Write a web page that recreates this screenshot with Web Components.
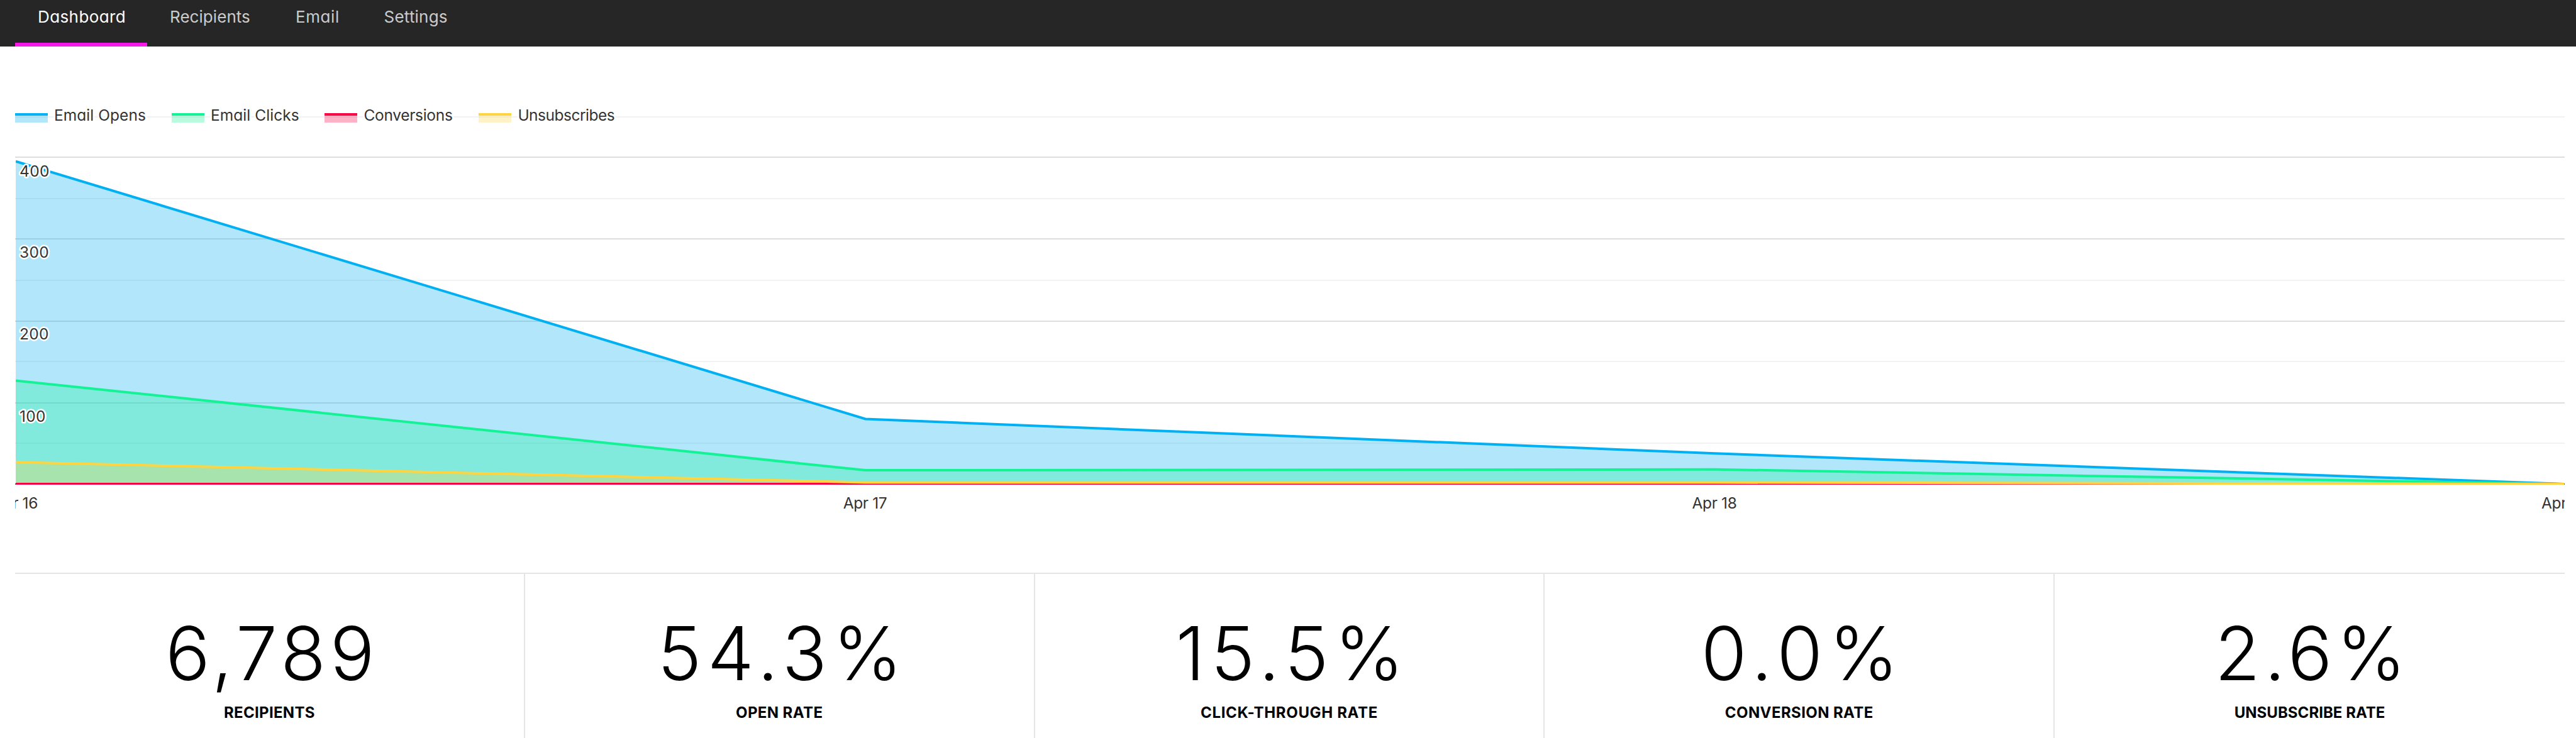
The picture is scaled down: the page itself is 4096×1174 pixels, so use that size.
<!DOCTYPE html>
<html lang="en">
<head>
<meta charset="utf-8">
<title>Dashboard</title>
<style>
  html, body {
    margin: 0;
    height: 100%;
    overflow: hidden;
    background: #fff;
    font-family: Inter, "Liberation Sans", sans-serif;
    font-feature-settings: "cv11";
  }
</style>
</head>
<body>
<dashboard-page>
  <nav-bar slot="nav">
    <nav-item active style="width: 210px; letter-spacing: 0.4px">Dashboard</nav-item>
    <nav-item style="width: 200px; letter-spacing: 0.05px">Recipients</nav-item>
    <nav-item style="width: 140.6px; letter-spacing: 0.6px">Email</nav-item>
    <nav-item style="width: 175px; letter-spacing: 0.2px">Settings</nav-item>
  </nav-bar>
  <area-chart>
    <legend-item slot="legend" color="0, 176, 243" style="width: 249px; letter-spacing: 0.05px">Email Opens</legend-item>
    <legend-item slot="legend" color="19, 243, 149" style="width: 243.4px; letter-spacing: 0.05px">Email Clicks</legend-item>
    <legend-item slot="legend" color="247, 0, 68" style="width: 245px; letter-spacing: -0.3px">Conversions</legend-item>
    <legend-item slot="legend" color="254, 213, 65" style="letter-spacing: -0.5px">Unsubscribes</legend-item>
  </area-chart>
  <stat-row slot="stats">
    <stat-card style="--value-gap: 6.7px; --label-gap: 0.3px">6,789<span slot="label">RECIPIENTS</span></stat-card>
    <stat-card style="--value-gap: 9.2px; --label-gap: 0.4px">54.3%<span slot="label">OPEN RATE</span></stat-card>
    <stat-card style="--value-gap: 9.4px; --label-gap: 0.65px">15.5%<span slot="label">CLICK-THROUGH RATE</span></stat-card>
    <stat-card style="--value-gap: 10.2px; --label-gap: 0.4px">0.0%<span slot="label">CONVERSION RATE</span></stat-card>
    <stat-card style="--value-gap: 6.7px; --label-gap: 0.03px">2.6%<span slot="label">UNSUBSCRIBE RATE</span></stat-card>
  </stat-row>
</dashboard-page>

<script>
class DashboardPage extends HTMLElement {
  constructor() {
    super();
    const shadow = this.attachShadow({ mode: 'open' });
    shadow.innerHTML = `
      <style>
        :host {
          display: flex;
          flex-direction: column;
          height: 100%;
        }
        main {
          flex: 0 0 837px;
          padding: 0 18px 0 24px;
        }
        footer {
          flex: 1;
          display: grid;
          padding: 0 18px 0 24px;
        }
      </style>
      <slot name="nav"></slot>
      <main><slot></slot></main>
      <footer><slot name="stats"></slot></footer>
    `;
  }
}

customElements.define('dashboard-page', DashboardPage);

class NavBar extends HTMLElement {
  constructor() {
    super();
    const shadow = this.attachShadow({ mode: 'open' });
    shadow.innerHTML = `
      <style>
        :host {
          display: flex;
          flex: 0 0 74px;
          padding-left: 24px;
          background: #262626;
        }
      </style>
      <slot></slot>
    `;
  }
}

customElements.define('nav-bar', NavBar);

class NavItem extends HTMLElement {
  constructor() {
    super();
    const shadow = this.attachShadow({ mode: 'open' });
    shadow.innerHTML = `
      <style>
        :host {
          display: block;
          box-sizing: border-box;
          padding: 7px 0 0 36px;
          font-size: 26px;
          line-height: 40px;
          white-space: nowrap;
          color: #cbcbcb;
          cursor: pointer;
        }
        :host([active]) {
          color: #fff;
          border-bottom: 6px solid #f618e6;
        }
      </style>
      <slot></slot>
    `;
  }
}

customElements.define('nav-item', NavItem);

class LegendItem extends HTMLElement {
  constructor() {
    super();
    const shadow = this.attachShadow({ mode: 'open' });
    const color = this.getAttribute('color');
    shadow.innerHTML = `
      <style>
        :host {
          display: flex;
          gap: 10px;
          font-size: 24.5px;
          line-height: 30px;
          white-space: nowrap;
          color: #333;
        }
        .swatch {
          width: 52px;
          height: 11px;
          margin-top: 12px;
          border-top: 4px solid rgb(${color});
          background: rgba(${color}, 0.3);
          background-clip: padding-box;
        }
        .text {
          -webkit-text-stroke: 5px #fff;
          paint-order: stroke fill;
        }
      </style>
      <div class="swatch"></div>
      <div class="text"><slot></slot></div>
    `;
  }
}

customElements.define('legend-item', LegendItem);

class AreaChart extends HTMLElement {
  constructor() {
    super();
    const shadow = this.attachShadow({ mode: 'open' });
    shadow.innerHTML = `
      <style>
        :host {
          display: grid;
        }
        svg, .legend {
          grid-area: 1 / 1;
        }
        svg {
          display: block;
          width: 4054px;
          height: 756px;
        }
        text {
          font-size: 24.5px;
          fill: #333;
        }
        .value {
          stroke: #fff;
          stroke-width: 5px;
          stroke-linejoin: round;
          paint-order: stroke;
        }
        .legend {
          display: flex;
          align-items: flex-start;
          padding-top: 94px;
        }
      </style>
      <svg viewBox="24 74 4054 756">
        <clipPath id="plot"><rect x="25" y="74" width="4052" height="697"/></clipPath>
        <g id="grid"></g>
        <g id="areas" clip-path="url(#plot)"></g>
        <g id="lines" clip-path="url(#plot)" fill="none" stroke-width="4"></g>
        <g id="labels"></g>
      </svg>
      <div class="legend"><slot name="legend"></slot></div>
    `;

    this.base = 770;
    this.xs = [25, 1376, 2726.5, 4077];
    this.series = [
      { color: '#00b0f3', ys: [256.6, 666.4, 721.2, 770] },
      { color: '#13f395', ys: [605.4, 748.1, 746.7, 770] },
      { color: '#f70044', ys: [770, 770, 770, 770] },
      { color: '#fed541', ys: [735.2, 767.6, 767.5, 770] }
    ];

    this.drawGrid();
    this.drawSeries();
    this.drawLabels();
  }

  add(parent, name, attrs, text) {
    const el = document.createElementNS('http://www.w3.org/2000/svg', name);
    for (const key in attrs) el.setAttribute(key, attrs[key]);
    if (text) el.textContent = text;
    this.shadowRoot.getElementById(parent).appendChild(el);
  }

  drawGrid() {
    // strong lines on hundreds, faint ones halfway between
    const major = [249, 379, 510, 640];
    const minor = [185, 315, 445, 574, 704];
    major.forEach(y => this.add('grid', 'rect', { x: 24, y, width: 4054, height: 2, fill: '#dedede' }));
    minor.forEach(y => this.add('grid', 'rect', { x: 24, y, width: 4054, height: 2, fill: '#f2f2f2' }));
    this.add('grid', 'rect', { x: 24, y: 769, width: 4054, height: 2, fill: '#666' });
  }

  drawSeries() {
    this.series.forEach(({ color, ys }) => {
      const points = ys.map((y, i) => `${this.xs[i]},${y}`).join(' ');
      this.add('areas', 'polygon', {
        points: `25,${this.base} ${points} 4077,${this.base}`,
        fill: color,
        'fill-opacity': 0.3
      });
      this.add('lines', 'polyline', { points, stroke: color });
    });
  }

  drawLabels() {
    [['400', 281], ['300', 410.3], ['200', 539.9], ['100', 670.7]].forEach(([text, y]) => {
      this.add('labels', 'text', { x: 31, y, class: 'value', 'letter-spacing': 0.3 }, text);
    });
    ['Apr 16', 'Apr 17', 'Apr 18', 'Apr 19'].forEach((text, i) => {
      this.add('labels', 'text', { x: this.xs[i] - 0.5, y: 809.2, 'text-anchor': 'middle', 'letter-spacing': -0.38 }, text);
    });
  }
}

customElements.define('area-chart', AreaChart);

class StatRow extends HTMLElement {
  constructor() {
    super();
    const shadow = this.attachShadow({ mode: 'open' });
    shadow.innerHTML = `
      <style>
        :host {
          display: grid;
          grid-template-columns: repeat(5, 1fr);
          border-top: 2px solid #e5e5e5;
        }
        ::slotted(:not(:last-child)) {
          border-right: 2px solid #e5e5e5;
        }
      </style>
      <slot></slot>
    `;
  }
}

customElements.define('stat-row', StatRow);

class StatCard extends HTMLElement {
  constructor() {
    super();
    const shadow = this.attachShadow({ mode: 'open' });
    shadow.innerHTML = `
      <style>
        :host {
          display: flex;
          flex-direction: column;
          align-items: center;
          padding-top: 65.5px;
          color: #000;
          white-space: nowrap;
        }
        .value {
          font-size: 118px;
          font-weight: 320;
          line-height: 120px;
          letter-spacing: var(--value-gap);
          margin-right: calc(-1 * var(--value-gap) - 2px);
        }
        .label {
          margin-top: 20.5px;
          font-size: 24px;
          font-weight: 700;
          line-height: 30px;
          letter-spacing: var(--label-gap);
        }
      </style>
      <div class="value"><slot></slot></div>
      <div class="label"><slot name="label"></slot></div>
    `;
  }
}

customElements.define('stat-card', StatCard);
</script>
</body>
</html>
